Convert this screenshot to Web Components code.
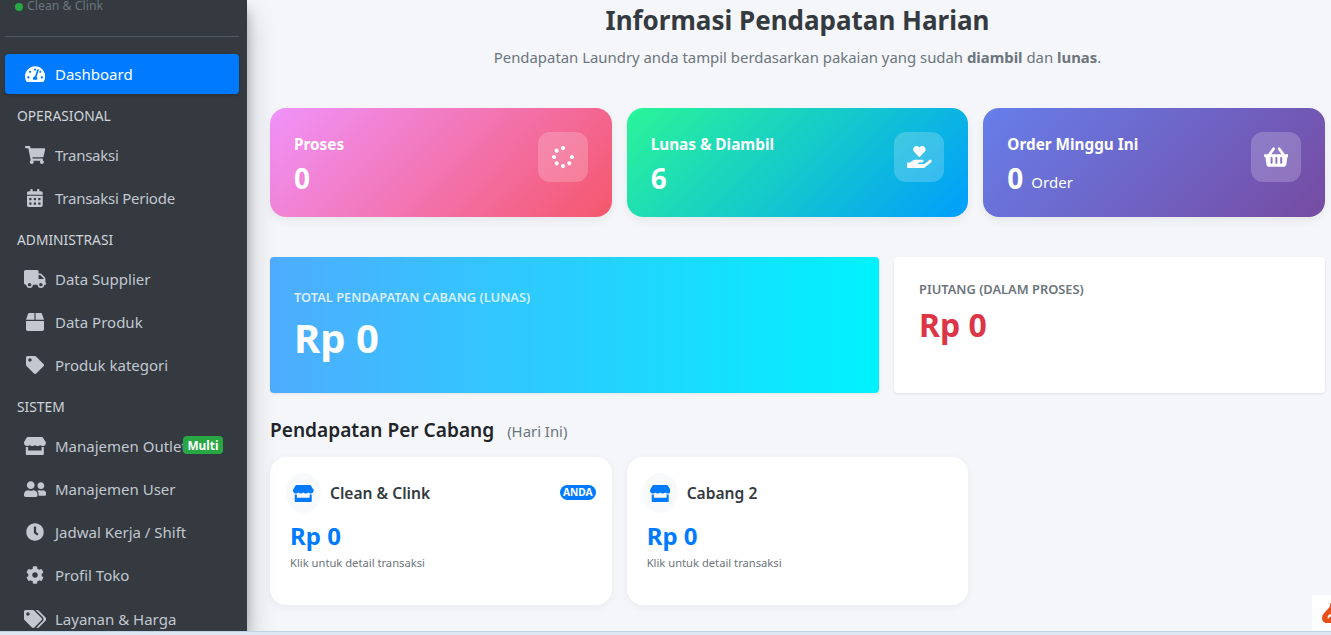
<!DOCTYPE html>
<html lang="id">
<head>
<meta charset="utf-8">
<title>Informasi Pendapatan Harian</title>
<style>
html,body{margin:0;height:100%;overflow:hidden;background:#dce7f3;font-family:"Noto Sans",sans-serif}
</style>
</head>
<body>
<laundry-app>
  <side-bar slot="side">
    <nav-item icon="gauge" active>Dashboard</nav-item>
    <nav-label>OPERASIONAL</nav-label>
    <nav-item icon="cart" tight>Transaksi</nav-item>
    <nav-item icon="calendar" tight>Transaksi Periode</nav-item>
    <nav-label>ADMINISTRASI</nav-label>
    <nav-item icon="truck">Data Supplier</nav-item>
    <nav-item icon="box">Data Produk</nav-item>
    <nav-item icon="tag">Produk kategori</nav-item>
    <nav-label>SISTEM</nav-label>
    <nav-item icon="store" badge="Multi">Manajemen Outlet</nav-item>
    <nav-item icon="friends">Manajemen User</nav-item>
    <nav-item icon="clock">Jadwal Kerja / Shift</nav-item>
    <nav-item icon="cog">Profil Toko</nav-item>
    <nav-item icon="tags">Layanan &amp; Harga</nav-item>
  </side-bar>
  <income-page slot="main"></income-page>
</laundry-app>

<script>
const ICONS = {
  gauge:[576,"M288 32C128.94 32 0 160.94 0 320c0 52.8 14.25 102.26 39.06 144.8 5.61 9.62 16.3 15.2 27.44 15.2h443c11.14 0 21.83-5.58 27.44-15.2C561.75 422.26 576 372.8 576 320c0-159.06-128.94-288-288-288zm0 64c14.71 0 26.58 10.13 30.32 23.65-1.11 2.26-2.64 4.23-3.45 6.67l-9.22 27.67c-5.13 3.49-10.97 6.01-17.64 6.01-17.67 0-32-14.33-32-32S270.33 96 288 96zM96 384c-17.67 0-32-14.33-32-32s14.33-32 32-32 32 14.33 32 32-14.33 32-32 32zm48-160c-17.67 0-32-14.33-32-32s14.33-32 32-32 32 14.33 32 32-14.33 32-32 32zm246.77-72.41l-61.33 184C343.13 347.33 352 364.54 352 384c0 11.72-3.38 22.55-8.88 32H232.88c-5.5-9.45-8.88-20.28-8.88-32 0-33.94 26.5-61.43 59.9-63.59l61.34-184.01c4.17-12.56 17.73-19.45 30.36-15.17 12.57 4.19 19.35 17.79 15.17 30.36zm14.66 57.2l15.52-46.55c3.47-1.29 7.13-2.23 11.05-2.23 17.67 0 32 14.33 32 32s-14.33 32-32 32c-11.38-.01-20.89-6.28-26.57-15.22zM480 384c-17.67 0-32-14.33-32-32s14.33-32 32-32 32 14.33 32 32-14.33 32-32 32z"],
  cart:[576,"M528.12 301.319l47.273-208C578.806 78.301 567.391 64 551.99 64H159.208l-9.166-44.81C147.758 8.021 137.93 0 126.529 0H24C10.745 0 0 10.745 0 24v16c0 13.255 10.745 24 24 24h69.883l70.248 343.435C147.325 417.1 136 435.222 136 456c0 30.928 25.072 56 56 56s56-25.072 56-56c0-15.674-6.447-29.835-16.824-40h209.647C430.447 426.165 424 440.326 424 456c0 30.928 25.072 56 56 56s56-25.072 56-56c0-22.172-12.888-41.332-31.579-50.405l5.517-24.276c3.413-15.018-8.002-29.319-23.403-29.319H218.117l-6.545-32h293.145c11.206 0 20.92-7.754 23.403-18.681z"],
  calendar:[448,"M0 464c0 26.5 21.5 48 48 48h352c26.5 0 48-21.5 48-48V192H0v272zm320-196c0-6.6 5.4-12 12-12h40c6.6 0 12 5.4 12 12v40c0 6.6-5.4 12-12 12h-40c-6.6 0-12-5.4-12-12v-40zm0 128c0-6.6 5.4-12 12-12h40c6.6 0 12 5.4 12 12v40c0 6.6-5.4 12-12 12h-40c-6.6 0-12-5.4-12-12v-40zM192 268c0-6.6 5.4-12 12-12h40c6.6 0 12 5.4 12 12v40c0 6.6-5.4 12-12 12h-40c-6.6 0-12-5.4-12-12v-40zm0 128c0-6.6 5.4-12 12-12h40c6.6 0 12 5.4 12 12v40c0 6.6-5.4 12-12 12h-40c-6.6 0-12-5.4-12-12v-40zM64 268c0-6.6 5.4-12 12-12h40c6.6 0 12 5.4 12 12v40c0 6.6-5.4 12-12 12H76c-6.6 0-12-5.4-12-12v-40zm0 128c0-6.6 5.4-12 12-12h40c6.6 0 12 5.4 12 12v40c0 6.6-5.4 12-12 12H76c-6.6 0-12-5.4-12-12v-40zM400 64h-48V16c0-8.8-7.2-16-16-16h-32c-8.8 0-16 7.2-16 16v48H160V16c0-8.8-7.2-16-16-16h-32c-8.8 0-16 7.2-16 16v48H48C21.5 64 0 85.5 0 112v48h448v-48c0-26.5-21.5-48-48-48z"],
  truck:[640,"M624 352h-16V243.9c0-12.7-5.1-24.9-14.1-33.9L494 110.1c-9-9-21.2-14.1-33.9-14.1H416V48c0-26.5-21.5-48-48-48H48C21.5 0 0 21.5 0 48v320c0 26.5 21.5 48 48 48h16c0 53 43 96 96 96s96-43 96-96h128c0 53 43 96 96 96s96-43 96-96h48c8.8 0 16-7.2 16-16v-32c0-8.8-7.2-16-16-16zM160 464c-26.5 0-48-21.5-48-48s21.5-48 48-48 48 21.5 48 48-21.5 48-48 48zm320 0c-26.5 0-48-21.5-48-48s21.5-48 48-48 48 21.5 48 48-21.5 48-48 48zm80-208H416V144h44.1l99.9 99.9V256z"],
  box:[512,"M509.5 184.6L458.9 32.8C452.4 13.2 434.1 0 413.4 0H272v192h238.7c-.4-2.5-.4-5-1.2-7.4zM240 0H98.6c-20.7 0-39 13.2-45.5 32.8L2.5 184.6c-.8 2.4-.8 4.9-1.2 7.4H240V0zM0 224v240c0 26.5 21.5 48 48 48h416c26.5 0 48-21.5 48-48V224H0z"],
  tag:[512,"M0 252.118V48C0 21.49 21.49 0 48 0h204.118a48 48 0 0 1 33.941 14.059l211.882 211.882c18.745 18.745 18.745 49.137 0 67.882L293.823 497.941c-18.745 18.745-49.137 18.745-67.882 0L14.059 286.059A48 48 0 0 1 0 252.118zM112 64c-26.51 0-48 21.49-48 48s21.49 48 48 48 48-21.49 48-48-21.49-48-48-48z"],
  tags:[640,"M497.941 225.941L286.059 14.059A48 48 0 0 0 252.118 0H48C21.49 0 0 21.49 0 48v204.118a48 48 0 0 0 14.059 33.941l211.882 211.882c18.744 18.745 49.136 18.746 67.882 0l204.118-204.118c18.745-18.745 18.745-49.137 0-67.882zM112 160c-26.51 0-48-21.49-48-48s21.49-48 48-48 48 21.49 48 48-21.49 48-48 48zm513.941 133.823L421.823 497.941c-18.745 18.745-49.137 18.745-67.882 0l-.36-.36L527.64 323.522c16.999-16.999 26.36-39.6 26.36-63.64s-9.362-46.641-26.36-63.64L331.397 0h48.721a48 48 0 0 1 33.941 14.059l211.882 211.882c18.745 18.745 18.745 49.137 0 67.882z"],
  store:[616,"M602 118.6L537.1 15C531.3 5.7 521 0 510 0H106C95 0 84.7 5.7 78.9 15L14 118.6c-33.9 54.1-3.9 129.3 59.4 137.9 4.6.6 9.2.9 13.7.9 29.9 0 56.4-13.1 74.7-33.4 18.3 20.3 44.8 33.4 74.7 33.4s56.4-13.1 74.7-33.4c18.3 20.3 44.8 33.4 74.7 33.4 30 0 56.4-13.1 74.7-33.4 18.4 20.3 44.8 33.4 74.7 33.4 4.6 0 9.1-.3 13.7-.9 63.5-8.5 93.6-83.7 59.6-137.9zM529.5 288c-10 0-19.9-1.5-29.5-3.8V384H116v-99.8c-9.6 2.2-19.5 3.8-29.5 3.8-6 0-12.1-.4-18-1.2-5.6-.8-11.1-2.1-16.4-3.6V480c0 17.7 14.3 32 32 32h448c17.7 0 32-14.3 32-32V283.2c-5.4 1.6-10.8 2.9-16.4 3.6-6.1.8-12.1 1.2-18.2 1.2z"],
  friends:[640,"M192 256c61.9 0 112-50.1 112-112S253.9 32 192 32 80 82.1 80 144s50.1 112 112 112zm76.8 32h-8.3c-20.8 10-43.9 16-68.5 16s-47.6-6-68.5-16h-8.3C51.6 288 0 339.6 0 403.2V432c0 26.5 21.5 48 48 48h288c26.5 0 48-21.5 48-48v-28.8c0-63.6-51.6-115.2-115.2-115.2zM480 256c53 0 96-43 96-96s-43-96-96-96-96 43-96 96 43 96 96 96zm48 32h-3.8c-13.9 4.8-28.6 8-44.2 8s-30.3-3.2-44.2-8H432c-20.4 0-39.2 5.9-55.7 15.4 24.4 26.3 39.7 61.2 39.7 99.8v38.4c0 2.2-.5 4.3-.6 6.4H592c26.5 0 48-21.5 48-48 0-61.9-50.1-112-112-112z"],
  clock:[512,"M256,8C119,8,8,119,8,256S119,504,256,504,504,393,504,256,393,8,256,8Zm92.49,313h0l-20,25a16,16,0,0,1-22.49,2.5h0l-67-49.72a40,40,0,0,1-15-31.23V112a16,16,0,0,1,16-16h32a16,16,0,0,1,16,16V256l58,42.5A16,16,0,0,1,348.49,321Z"],
  cog:[512,"M487.4 315.7l-42.6-24.6c4.3-23.2 4.3-47 0-70.2l42.6-24.6c4.9-2.8 7.1-8.6 5.5-14-11.1-35.6-30-67.8-54.7-94.6-3.8-4.1-10-5.1-14.8-2.3L380.8 110c-17.9-15.4-38.5-27.3-60.8-35.1V25.8c0-5.6-3.9-10.5-9.4-11.7-36.7-8.2-74.3-7.8-109.2 0-5.5 1.2-9.4 6.1-9.4 11.7V75c-22.2 7.9-42.8 19.8-60.8 35.1L88.7 85.5c-4.9-2.8-11-1.9-14.8 2.3-24.7 26.7-43.6 58.9-54.7 94.6-1.7 5.4.6 11.2 5.5 14L67.3 221c-4.3 23.2-4.3 47 0 70.2l-42.6 24.6c-4.9 2.8-7.1 8.6-5.5 14 11.1 35.6 30 67.8 54.7 94.6 3.8 4.1 10 5.1 14.8 2.3l42.6-24.6c17.9 15.4 38.5 27.3 60.8 35.1v49.2c0 5.6 3.9 10.5 9.4 11.7 36.7 8.2 74.3 7.8 109.2 0 5.5-1.2 9.4-6.1 9.4-11.7v-49.2c22.2-7.9 42.8-19.8 60.8-35.1l42.6 24.6c4.9 2.8 11 1.9 14.8-2.3 24.7-26.7 43.6-58.9 54.7-94.6 1.5-5.5-.7-11.3-5.6-14.1zM256 336c-44.1 0-80-35.9-80-80s35.9-80 80-80 80 35.9 80 80-35.9 80-80 80z"],
  spinner:[512,"M304 48c0 26.51-21.49 48-48 48s-48-21.49-48-48 21.49-48 48-48 48 21.49 48 48zm-48 368c-26.51 0-48 21.49-48 48s21.49 48 48 48 48-21.49 48-48-21.49-48-48-48zm208-208c-26.51 0-48 21.49-48 48s21.49 48 48 48 48-21.49 48-48-21.49-48-48-48zM96 256c0-26.51-21.49-48-48-48S0 229.49 0 256s21.49 48 48 48 48-21.49 48-48zm12.922 99.078c-26.51 0-48 21.49-48 48s21.49 48 48 48 48-21.49 48-48c0-26.509-21.491-48-48-48zm294.156 0c-26.51 0-48 21.49-48 48s21.49 48 48 48 48-21.49 48-48c0-26.509-21.49-48-48-48zM108.922 60.922c-26.51 0-48 21.49-48 48s21.49 48 48 48 48-21.49 48-48-21.491-48-48-48z"],
  heart:[576,"M275.3 250.5c7 7.4 18.4 7.4 25.5 0l108.9-114.2c31.6-33.2 29.8-88.2-5.6-118.8-30.8-26.7-76.7-21.9-104.9 7.7L288 36.9l-11.1-11.6C248.7-4.4 202.8-9.2 172 17.5c-35.3 30.6-37.2 85.6-5.6 118.8l108.9 114.2zm290 77.6c-11.8-10.7-30.2-10-42.6 0L430.3 402c-11.3 9.1-25.4 14-40 14H272c-8.8 0-16-7.2-16-16s7.2-16 16-16h78.3c15.9 0 30.7-10.9 33.3-26.6 3.3-20-12.1-37.4-31.6-37.4H192c-27 0-53.1 9.3-74.1 26.3L71.4 384H16c-8.8 0-16 7.2-16 16v96c0 8.8 7.2 16 16 16h356.8c14.5 0 28.6-4.9 40-14l151.2-121c15.2-12.2 16.4-35.1 1.3-48.9z"],
  basket:[576,"M576 216v16c0 13.255-10.745 24-24 24h-8l-26.113 182.788C514.509 462.435 494.257 480 470.37 480H105.63c-23.887 0-44.139-17.565-47.518-41.212L32 256h-8c-13.255 0-24-10.745-24-24v-16c0-13.255 10.745-24 24-24h67.341l106.78-146.821c10.395-14.292 30.407-17.453 44.701-7.058 14.293 10.395 17.453 30.408 7.058 44.701L170.477 192h235.046L326.12 82.821c-10.395-14.292-7.234-34.306 7.059-44.701 14.291-10.395 34.306-7.235 44.701 7.058L484.659 192H552c13.255 0 24 10.745 24 24zM312 392V280c0-13.255-10.745-24-24-24s-24 10.745-24 24v112c0 13.255 10.745 24 24 24s24-10.745 24-24zm112 0V280c0-13.255-10.745-24-24-24s-24 10.745-24 24v112c0 13.255 10.745 24 24 24s24-10.745 24-24zm-224 0V280c0-13.255-10.745-24-24-24s-24 10.745-24 24v112c0 13.255 10.745 24 24 24s24-10.745 24-24z"]
}

function icon(name, h) {
  const [w, d] = ICONS[name]
  return `<svg width="${h*w/512}" height="${h}" viewBox="0 0 ${w} 512" fill="currentColor" style="display:block"><path d="${d}"/></svg>`
}

class LaundryApp extends HTMLElement {
  constructor() {
    super()
    this.attachShadow({mode:'open'}).innerHTML = `
<style>
:host{display:block;height:631px;background:#f4f6f9;box-shadow:0 1px 0 #c3d2e2}
.wrap{display:flex;height:100%;overflow:hidden}
</style>
<div class="wrap"><slot name="side"></slot><slot name="main"></slot></div>`
  }
}

class SideBar extends HTMLElement {
  constructor() {
    super()
    this.attachShadow({mode:'open'}).innerHTML = `
<style>
:host{display:block;flex:0 0 247px;width:247px;height:631px;background:#343a40;overflow:hidden;
  box-shadow:0 14px 28px rgba(0,0,0,.25),0 10px 10px rgba(0,0,0,.22);position:relative;z-index:2}
.status{margin:-4px 8px 0 5px;padding-left:10px;height:41px;box-sizing:border-box;border-bottom:1px solid #4f5962;
  font-size:12.3px;line-height:19px;color:#6c757d;display:flex;gap:4px;align-items:flex-start}
.dot{width:8px;height:8px;margin-top:7px;border-radius:50%;background:#28a745;flex:none}
nav{display:flex;flex-direction:column;padding:17px 8px 0 5px}
</style>
<div class="status"><span class="dot"></span>Clean &amp; Clink</div>
<nav><slot></slot></nav>`
  }
}

class NavLabel extends HTMLElement {
  constructor() {
    super()
    this.attachShadow({mode:'open'}).innerHTML = `
<style>
:host{display:block;height:37.6px;box-sizing:border-box;padding:11px 0 0 12px;font-size:13.8px;line-height:20px;color:#d0d4db}
</style><slot></slot>`
  }
}

class NavItem extends HTMLElement {
  constructor() {
    super()
    const on = this.hasAttribute('active')
    const badge = this.getAttribute('badge')
    this.attachShadow({mode:'open'}).innerHTML = `
<style>
:host{display:block;height:${on?'40px':'43.2px'};margin-bottom:${on?'1px':'0'}}
a{display:flex;align-items:center;height:100%;box-sizing:border-box;border-radius:4px;color:${on?'#fff':'#c2c7d0'};
  background:${on?'#007bff':'none'};font-size:15px;line-height:20px;white-space:nowrap;position:relative;
  ${on?'':'padding-top:1px;'}
  ${this.hasAttribute('tight')?'letter-spacing:-.25px;':''}
  ${on?'box-shadow:0 1px 3px rgba(0,0,0,.2);':''}}
.ic{width:50px;flex:none;padding-left:10px;box-sizing:border-box}
.ic span{width:40px;display:flex;justify-content:center}
.badge{position:absolute;left:178px;top:50%;transform:translateY(-50%);background:#28a745;color:#fff;letter-spacing:0;
  font-weight:700;font-size:11.8px;line-height:18px;height:18px;padding:0 4.5px;border-radius:4px}
</style>
<a><div class="ic"><span>${icon(this.getAttribute('icon'), 18)}</span></div><span><slot></slot></span>
${badge?`<span class="badge">${badge}</span>`:''}</a>`
  }
}

class StatCard extends HTMLElement {
  constructor() {
    super()
    const unit = this.getAttribute('unit')
    this.attachShadow({mode:'open'}).innerHTML = `
<style>
:host{display:block;height:109px;border-radius:16px;color:#fff;background:${this.getAttribute('bg')};
  box-shadow:0 4px 10px rgba(0,0,0,.06)}
.in{display:flex;justify-content:space-between;align-items:flex-start;height:100%;box-sizing:border-box;padding:24px 24px 0}
.t{font-size:15.3px;font-weight:700;line-height:24px;margin-bottom:4px}
.v{font-size:28px;font-weight:700;line-height:36px;height:36px}
.u{font-size:15px;font-weight:400;line-height:1;margin-left:8px;vertical-align:1px}
.i{width:50px;height:50px;border-radius:12px;background:rgba(255,255,255,.2);display:flex;align-items:center;justify-content:center}
</style>
<div class="in"><div><div class="t">${this.getAttribute('label')}</div>
<div class="v">${this.getAttribute('value')}${unit?`<span class="u">${unit}</span>`:''}</div></div>
<div class="i">${icon(this.getAttribute('icon'), 22)}</div></div>`
  }
}

class BranchCard extends HTMLElement {
  constructor() {
    super()
    const me = this.hasAttribute('mine')
    this.attachShadow({mode:'open'}).innerHTML = `
<style>
:host{display:block;height:148px;background:#fff;border-radius:16px;box-shadow:0 2px 8px rgba(0,0,0,.05);box-sizing:border-box;padding:16px 16px 0 16px}
.h{display:flex;align-items:center;gap:9px;position:relative}
.i{width:35px;height:40px;border-radius:50%;background:#f8f9fa;color:#007bff;display:flex;align-items:center;justify-content:center;flex:none}
.n{font-size:15.6px;font-weight:600;color:#343a40;line-height:20px}
.me{position:absolute;right:0;top:12px;background:#007bff;color:#fff;font-size:10.2px;font-weight:700;line-height:15px;padding:0 3px;border-radius:8px}
.v{margin:7px 0 0 4px;font-size:24px;font-weight:700;color:#007bff;line-height:32px}
.s{margin:3px 0 0 4px;font-size:11.2px;color:#6c757d;line-height:16px}
</style>
<div class="h"><div class="i">${icon('store', 17)}</div><div class="n">${this.getAttribute('name')}</div>
${me?'<span class="me">ANDA</span>':''}</div>
<div class="v">Rp 0</div><div class="s">Klik untuk detail transaksi</div>`
  }
}

class IncomePage extends HTMLElement {
  constructor() {
    super()
    this.attachShadow({mode:'open'}).innerHTML = `
<style>
:host{display:block;flex:1;min-width:0;position:relative;padding:0 6px 0 23px}
header{text-align:center;height:108px;box-sizing:border-box}
h1{margin:0;font-size:26px;font-weight:700;color:#343a40;line-height:40px}
header p{margin:6px 0 0;font-size:14.9px;line-height:22px;color:#6c757d}
.three{display:grid;grid-template-columns:repeat(3,1fr);gap:15px}
.two{display:grid;grid-template-columns:609fr 431fr;gap:15px;margin-top:40px;height:136px}
.total{background:linear-gradient(90deg,#4facfe 0%,#00f2fe 100%);border-radius:4px;color:#fff;padding:30px 24px 0;box-sizing:border-box;box-shadow:0 1px 3px rgba(0,0,0,.08)}
.total small{display:block;font-size:12.85px;font-weight:600;line-height:20px;opacity:.78}
.total div{font-size:40px;font-weight:700;line-height:56px;margin-top:3px}
.debt{background:#fff;border-radius:4px;padding:22px 25px 0;box-sizing:border-box;box-shadow:0 1px 3px rgba(0,0,0,.08)}
.debt small{display:block;font-size:12.85px;font-weight:600;line-height:20px;color:#6c757d}
.debt div{font-size:32px;font-weight:700;line-height:44px;color:#dc3545;margin-top:4px}
h2{margin:0;height:64px;box-sizing:border-box;padding-top:23px;font-size:19.1px;font-weight:600;line-height:28px;color:#212529}
h2 span{font-size:14.9px;font-weight:400;color:#6c757d;margin-left:8px}
.ribbon{position:absolute;right:0;bottom:0;width:19px;height:36px;background:#fff;overflow:hidden}
.ribbon svg{position:absolute;left:10px;top:8px}
</style>
<header><h1>Informasi Pendapatan Harian</h1>
<p>Pendapatan Laundry anda tampil berdasarkan pakaian yang sudah <b>diambil</b> dan <b>lunas</b>.</p></header>
<div class="three">
  <stat-card label="Proses" value="0" icon="spinner" bg="linear-gradient(135deg,#f093fb 0%,#f5576c 100%)"></stat-card>
  <stat-card label="Lunas &amp; Diambil" value="6" icon="heart" bg="linear-gradient(135deg,#2af598 0%,#009efd 100%)"></stat-card>
  <stat-card label="Order Minggu Ini" value="0" unit="Order" icon="basket" bg="linear-gradient(135deg,#667eea 0%,#764ba2 100%)"></stat-card>
</div>
<div class="two">
  <div class="total"><small>TOTAL PENDAPATAN CABANG (LUNAS)</small><div>Rp 0</div></div>
  <div class="debt"><small>PIUTANG (DALAM PROSES)</small><div>Rp 0</div></div>
</div>
<h2>Pendapatan Per Cabang <span>(Hari Ini)</span></h2>
<div class="three">
  <branch-card name="Clean &amp; Clink" mine></branch-card>
  <branch-card name="Cabang 2"></branch-card>
</div>
<div class="ribbon"><svg width="12" height="20" viewBox="0 0 12 20"><path fill="#e8501a" d="M8 0c1 3-1 5-4 8C2 10 0 12 0 15c0 3 2 5 5 5h7V3C11 2 9.500 1 8 0z"/><path fill="#fff" d="M8 11c-2 1-3 3-2 5 1-1 2-3 4-3z"/></svg></div>`
  }
}

customElements.define('stat-card', StatCard)
customElements.define('branch-card', BranchCard)
customElements.define('nav-label', NavLabel)
customElements.define('nav-item', NavItem)
customElements.define('side-bar', SideBar)
customElements.define('income-page', IncomePage)
customElements.define('laundry-app', LaundryApp)
</script>
</body>
</html>
